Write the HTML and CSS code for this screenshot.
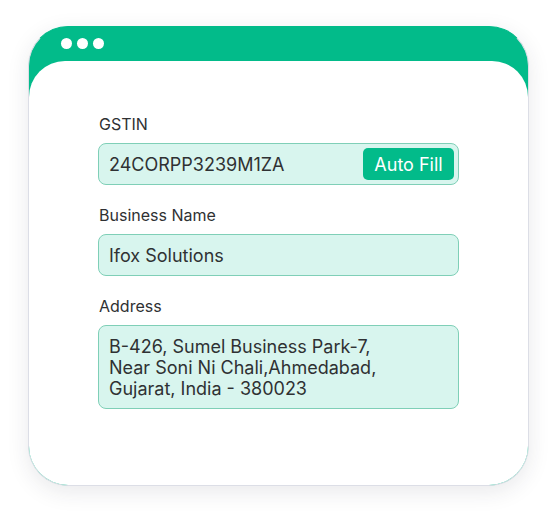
FILE: index.html
```html
<!DOCTYPE html>
<html>
<head>
<meta charset="utf-8">
<link rel="stylesheet" href="styles.css">
</head>
<body>
<div class="wrap">
  <div class="window">
    <div class="titlebar">
      <span class="dot"></span><span class="dot"></span><span class="dot"></span>
    </div>
    <div class="content">
      <div class="field">
        <div class="label">GSTIN</div>
        <div class="input input-gstin">
          <span>24CORPP3239M1ZA</span>
          <span class="btn">Auto Fill</span>
        </div>
      </div>
      <div class="field">
        <div class="label">Business Name</div>
        <div class="input">Ifox Solutions</div>
      </div>
      <div class="field">
        <div class="label">Address</div>
        <div class="input textarea">B-426, Sumel Business Park-7,<br>Near Soni Ni Chali,Ahmedabad,<br>Gujarat, India - 380023</div>
      </div>
    </div>
  </div>
</div>
</body>
</html>
```

FILE: styles.css
```css
* { box-sizing: border-box; }
html, body { margin: 0; padding: 0; background: #ffffff; }
body {
  font-family: Inter, "Noto Sans", sans-serif;
  color: #2f3133;
}
.wrap {
  padding: 26px 29px 30px 28px;
}
.window {
  width: 501px;
  height: 460px;
  border-radius: 40px;
  background: #02bb8a;
  overflow: hidden;
  display: flex;
  flex-direction: column;
  border: 1px solid #dcdee6;
  border-top-color: #02bb8a;
  box-shadow: 0 6px 22px rgba(40, 44, 60, 0.10);
}
.titlebar {
  height: 34px;
  flex: none;
  display: flex;
  align-items: flex-start;
  gap: 5px;
  padding: 11px 0 0 32px;
}
.dot {
  width: 11px;
  height: 11px;
  border-radius: 50%;
  background: #ffffff;
}
.content {
  flex: 1;
  background: #ffffff;
  border-radius: 36px 36px 0 0;
  padding: 53px 69px 0 70px;
  display: flex;
  flex-direction: column;
  gap: 20px;
}
.field {
  display: flex;
  flex-direction: column;
  gap: 9px;
}
.label {
  font-size: 16px;
  line-height: 20px;
  color: #2f3133;
}
.input {
  height: 42px;
  border: 1px solid #7fcfb7;
  background: #d8f5ee;
  border-radius: 8px;
  padding: 0 10px;
  font-size: 18px;
  display: flex;
  align-items: center;
  color: #2f3133;
  margin-left: -1px;
}
.input-gstin {
  justify-content: space-between;
  padding-right: 4px;
}
.btn {
  background: #02bb8a;
  color: #ffffff;
  border-radius: 5px;
  height: 32px;
  width: 91px;
  display: flex;
  align-items: center;
  justify-content: center;
  font-size: 18px;
}
.textarea {
  height: 84px;
  display: block;
  padding-top: 10px;
  line-height: 21px;
}
```
